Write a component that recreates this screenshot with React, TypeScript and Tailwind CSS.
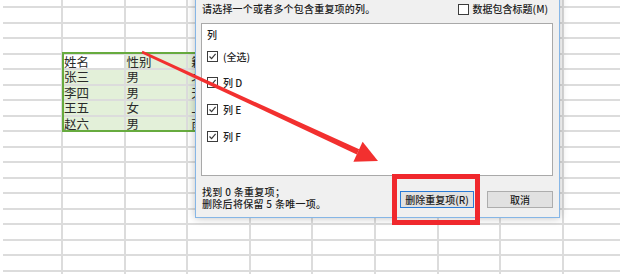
import React from 'react';

const COLS = 10;
const ROWS = 18;

const data: Record<string, string> = {
  '4-1': '姓名', '4-2': '性别', '4-3': '籍贯',
  '5-1': '张三', '5-2': '男', '5-3': '北京',
  '6-1': '李四', '6-2': '男', '6-3': '天津',
  '7-1': '王五', '7-2': '女', '7-3': '上海',
  '8-1': '赵六', '8-2': '男', '8-3': '南京',
};

function Sheet() {
  return (
    <div className="ml-[3px] flex flex-col">
      {Array.from({ length: ROWS + 1 }).map((_, r) => (
        <div key={r} className={`flex ${r === 0 ? 'h-[8px]' : 'h-[15.5px]'}`}>
          {Array.from({ length: COLS }).map((_, c) => {
            const selected = r >= 4 && r <= 8 && c >= 1 && c <= 3;
            const active = r === 4 && c === 1;
            const text = data[`${r}-${c}`];
            return (
              <div
                key={c}
                className={`shrink-0 border-r-2 border-b-2 border-[#dcdcdc] pl-[1px] text-[12.5px] leading-[13px] text-[#2a2a2a] overflow-hidden whitespace-nowrap ${
                  c === 0 ? 'w-[60px]' : 'w-[62.6px]'
                } ${c === 3 ? 'pl-[3px]' : ''} ${selected && !active ? 'bg-[#e3f0d9]' : 'bg-white'}`}
              >
                {text}
              </div>
            );
          })}
        </div>
      ))}
    </div>
  );
}

function Check({ checked }: { checked: boolean }) {
  return (
    <span className="w-[11px] h-[11px] shrink-0 border border-[#3c3c3c] bg-white flex items-center justify-center">
      {checked && (
        <svg width="9" height="9" viewBox="0 0 9 9">
          <path d="M1.5 4.5 L3.6 6.7 L7.6 1.8" fill="none" stroke="#3a3a3a" strokeWidth="1.2" />
        </svg>
      )}
    </span>
  );
}

function Dialog() {
  const items = ['(全选)', '列 D', '列 E', '列 F'];
  return (
    <div className="absolute left-[195px] top-[-12px] w-[365px] h-[230px] bg-[#f0f0f0] border border-[#86b6e6] shadow-[0_0_8px_rgba(0,0,0,0.25)] pl-[5px] pr-[6px] text-[10px] text-[#1e1e1e] font-medium flex flex-col">
      <div className="mt-[13px] h-[14px] flex items-center justify-between pl-[1px] pr-[5px]">
        <span className="tracking-[0.2px] leading-[14px]">请选择一个或者多个包含重复项的列。</span>
        <span className="flex items-center gap-[4px] leading-[14px]">
          <Check checked={false} />
          <span>数据包含标题(M)</span>
        </span>
      </div>
      <div className="mt-[7px] h-[153px] bg-white border border-[#a9a9a9] pl-[5px] pt-[4px] flex flex-col">
        <div className="h-[13px] leading-[13px]">列</div>
        <div className="mt-[2px] flex flex-col">
          {items.map((t) => (
            <div key={t} className="h-[26.6px] flex items-center gap-[5px] leading-[13px]">
              <Check checked />
              <span>{t}</span>
            </div>
          ))}
        </div>
      </div>
      <div className="flex justify-between">
        <div className="mt-[10px] flex flex-col leading-[12px] pl-[1px] tracking-[0.3px]">
          <span>找到 0 条重复项；</span>
          <span>删除后将保留 5 条唯一项。</span>
        </div>
        <div className="mt-[15px] flex gap-[13px]">
          <button className="w-[74px] h-[17px] bg-[#e1e1e1] border border-[#2b7bd6] text-[10px] leading-[15px] text-[#1e1e1e]">
            删除重复项(R)
          </button>
          <button className="w-[66px] h-[17px] bg-[#e1e1e1] border border-[#adadad] text-[10px] leading-[15px] text-[#1e1e1e]">
            取消
          </button>
        </div>
      </div>
    </div>
  );
}

export default function App() {
  return (
    <div className="relative w-[620px] h-[274px] overflow-hidden bg-white font-['Noto_Sans_CJK_SC',sans-serif]">
      <Sheet />
      {/* selection outline */}
      <div className="absolute left-[62px] top-[52px] w-[190px] h-[80px] border-2 border-[#67ab3f]" />
      <Dialog />
      {/* annotation */}
      <div className="absolute left-[392px] top-[174px] w-[88px] h-[51px] border-[5px] border-[#f0282d]" />
      <svg className="absolute left-0 top-0" width="620" height="274" viewBox="0 0 620 274">
        <polygon points="141.5,53.2 142.5,50.8 359.2,149.3 356.8,154.4" fill="#f2302f" />
        <polygon points="378,161 353.4,161.8 362.6,141.8" fill="#f2302f" />
      </svg>
    </div>
  );
}
